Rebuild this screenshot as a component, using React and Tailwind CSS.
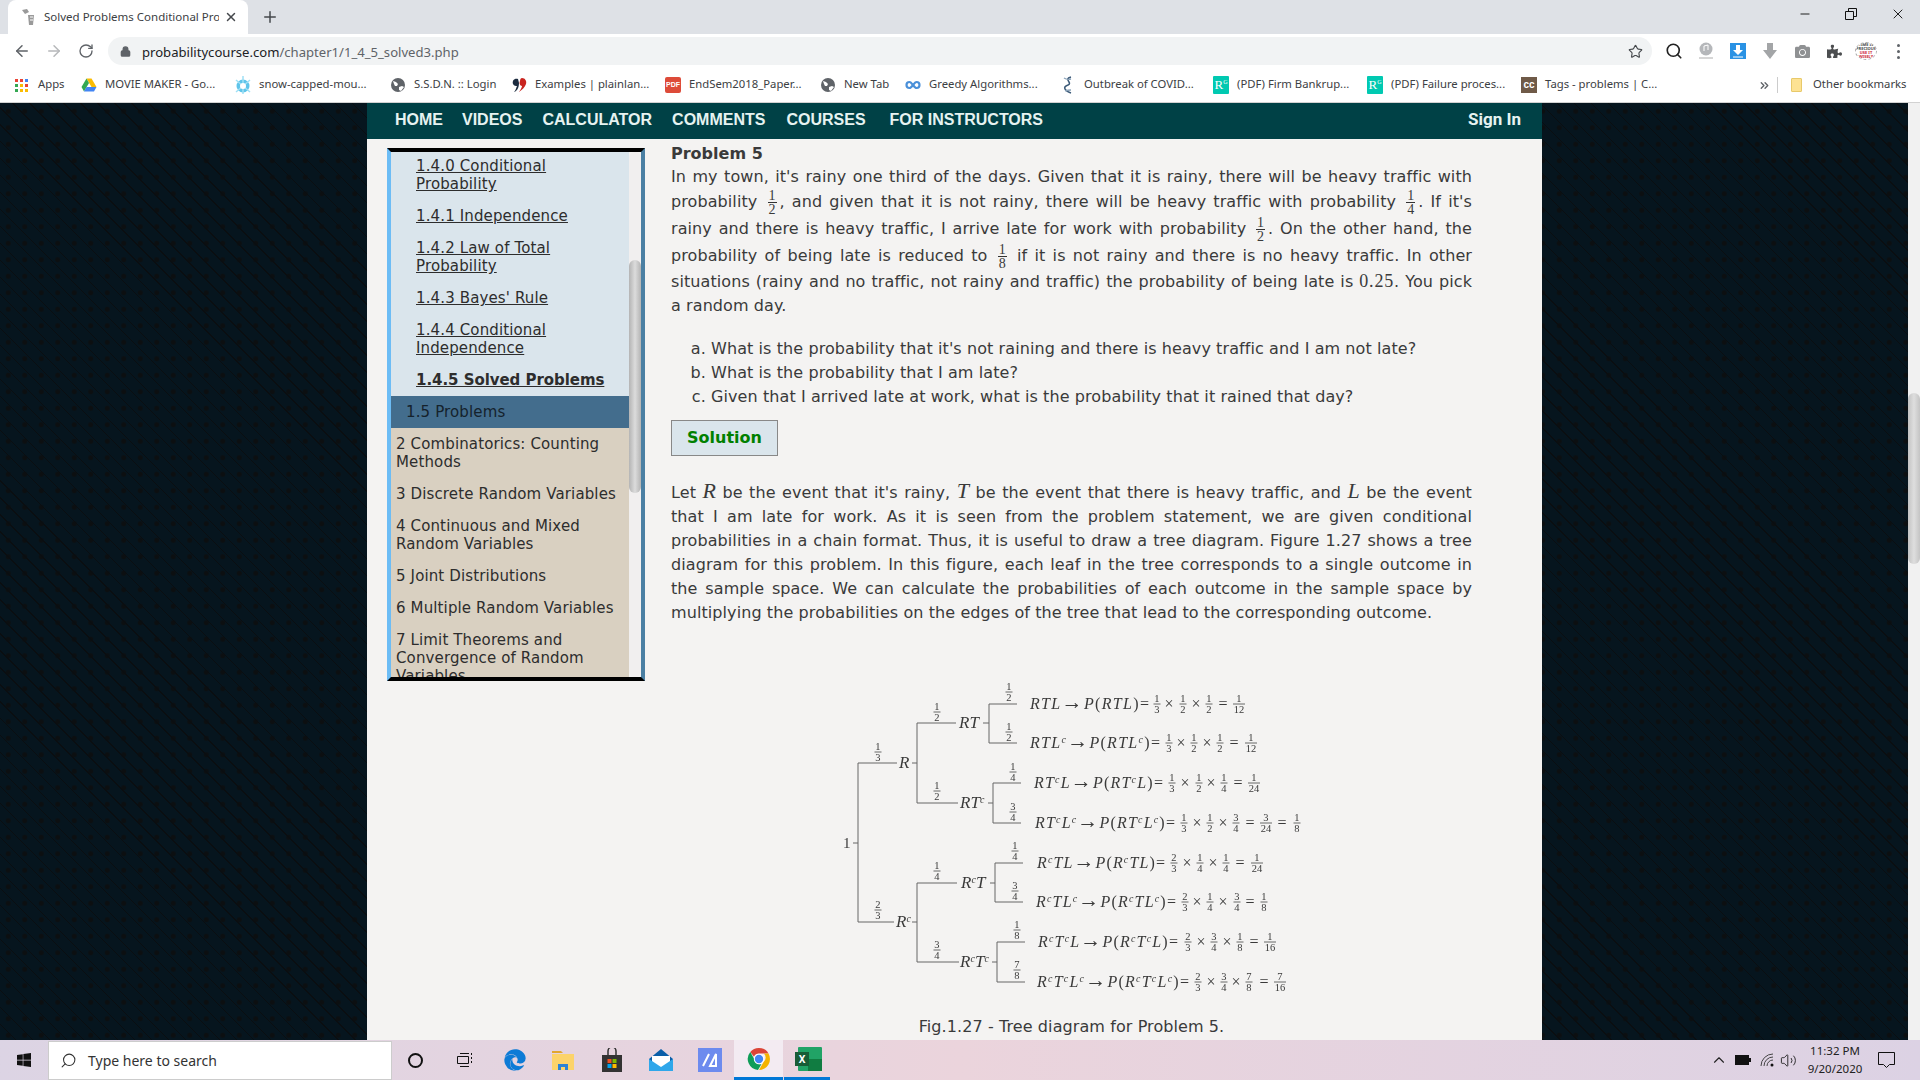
import React from 'react';
import { ArrowLeft, ArrowRight, RotateCw, Lock, Star, Search, Plus, X, Minus, ChevronUp, ChevronsRight, Volume2 } from 'lucide-react';
import { FaEdge, FaWindows, FaPuzzlePiece, FaCamera } from 'react-icons/fa';

const Globe = () => (
  <svg width="16" height="16" viewBox="0 0 16 16"><circle cx="8" cy="8" r="7" fill="#5f6368" /><path d="M3 4l3 1 2 2-1 2-2 0-1-2zM9 10l3-1 2 1-3 4-2-1z" fill="#fff" /></svg>
);
const Drive = () => (
  <svg width="16" height="16" viewBox="0 0 16 16"><path d="M5.5 1.5h5L15.5 10h-5z" fill="#fbbc04" /><path d="M5.5 1.5L.5 10 3 14.500 8 6z" fill="#34a853" /><path d="M3 14.500h10L15.500 10H5.500z" fill="#4285f4" /></svg>
);
const Snow = () => (
  <svg width="16" height="18" viewBox="0 0 16 18"><circle cx="8" cy="10" r="6.500" fill="#5ec4ea" /><path d="M8 0v18M1 4l14 12M15 4L1 16" stroke="#9fe0f5" strokeWidth="1.500" /><circle cx="8" cy="10" r="3" fill="#fff" /></svg>
);
const Quotes = () => (
  <svg width="16" height="16" viewBox="0 0 16 16"><path d="M7 2C3 1 1 4 2 7c1 2 3 2 4 2-1 2-1 4-3 6 4-1 5-6 5-9z" fill="#1b2b3f" /><path d="M11 1c3 0 5 3 4 6-1 3-4 6-7 8 2-3 3-5 3-6-2 0-3-3-2-5 0-2 1-3 2-3z" fill="#c9241f" /></svg>
);
const PdfIcon = () => (
  <div className="w-[16px] h-[16px] rounded-[2px] bg-[#dd4b39] text-white text-[7px] font-bold leading-[16px] text-center [font-family:'Liberation_Sans',sans-serif]">PDF</div>
);
const Infinity8 = () => (
  <svg width="16" height="16" viewBox="0 0 16 16" fill="none"><path d="M4.500 5a3 3 0 100 6c2.500 0 4.500-6 7-6a3 3 0 110 6c-2.500 0-4.500-6-7-6z" stroke="#4a90d9" strokeWidth="2.200" /></svg>
);
const Dna = () => (
  <svg width="16" height="18" viewBox="0 0 16 18" fill="none"><path d="M11 1C3 3 13 7 8 9c-6 2-3 6 3 8" stroke="#3c5a78" strokeWidth="1.600" /><path d="M4 2c3 2 7 1 7 1M5 15c3-1 6-1 6-1" stroke="#8aa2b8" strokeWidth="1.300" /></svg>
);
const RBadge = () => (
  <div className="w-[16px] h-[18px] rounded-[1px] bg-[#00c9b1] text-white flex items-start justify-center leading-[18px] [font-family:'Liberation_Serif',serif]">
    <span className="text-[13px]">R</span>
    <span className="text-[6px] leading-[12px]">G</span>
  </div>
);
const CcBadge = () => (
  <div className="w-[16px] h-[16px] bg-[#6f5a48] text-white text-[10px] font-bold leading-[15px] text-center [font-family:'Liberation_Sans',sans-serif]">cc</div>
);

const Bookmark = ({ icon, text, className }) => (
  <div className={`flex items-center gap-2 shrink-0 ${className}`}>
    <div className="shrink-0">{icon}</div>
    <span className="whitespace-nowrap -mt-[2px]">{text}</span>
  </div>
);

const ChromeLogo = () => (
  <svg width="24" height="24" viewBox="0 0 24 24">
    <path d="M12 1a11 11 0 019.500 5.500H12a5.500 5.500 0 00-5 3.200L3.300 5A11 11 0 0112 1z" fill="#db4437" />
    <path d="M21.500 6.500A11 11 0 0112 23l4.700-8.200a5.500 5.500 0 00.100-8.300z" fill="#f4b400" />
    <path d="M3.300 5L8 13.500a5.500 5.500 0 006.500 3.400L11 23A11 11 0 013.300 5z" fill="#0f9d58" />
    <circle cx="12" cy="12" r="5.200" fill="#fff" />
    <circle cx="12" cy="12" r="4.200" fill="#4285f4" />
  </svg>
);

const ToolSlot = ({ children }) => (
  <div className="w-[32px] flex items-center justify-center shrink-0">{children}</div>
);

const TopBar = () => (
  <div className="shrink-0 [font-family:'Noto_Sans',sans-serif]">
    <div className="h-[34px] bg-[#dee1e6] flex items-end relative">
      <div className="ml-2 w-[240px] h-[34px] bg-white rounded-t-[8px] flex items-center pl-3 text-[11.500px] text-[#3c4043]">
        <svg width="16" height="18" viewBox="0 0 16 18" className="shrink-0"><path d="M2 2l5-1 2 3-4 2zM8 7h6l-1 10H9z" fill="#9a9a9a" /><path d="M10 9h3M10 12h3" stroke="#fff" /></svg>
        <span className="ml-2 w-[175px] overflow-hidden whitespace-nowrap">Solved Problems Conditional Probability</span>
        <X size={14} strokeWidth={2.5} className="ml-[5px] text-[#45484c]" />
      </div>
      <Plus size={18} strokeWidth={2} className="ml-[13px] mb-2 text-[#45484c]" />
      <div className="ml-auto mr-[14px] self-start mt-[6px] flex items-center gap-[32px] text-[#111]">
        <Minus size={14} strokeWidth={1.600} />
        <svg width="14" height="14" viewBox="0 0 14 14" fill="none" stroke="#111"><path d="M1.500 4.500h8v8h-8zM4.500 4.500v-3h8v8h-3" /></svg>
        <X size={16} strokeWidth={1.400} />
      </div>
    </div>
    <div className="h-[34px] bg-white flex items-center">
      <ArrowLeft size={18} strokeWidth={2} className="ml-[13px] text-[#5f6368]" />
      <ArrowRight size={18} strokeWidth={2} className="ml-[14px] text-[#b6b8ba]" />
      <RotateCw size={16} strokeWidth={2} className="ml-[15px] text-[#5f6368]" />
      <div className="ml-[14px] w-[1544px] h-[28px] bg-[#f1f3f4] rounded-full flex items-center pl-[12px] pr-[9px]">
        <Lock size={11} strokeWidth={3} className="text-[#5f6368] fill-[#5f6368]" />
        <span className="ml-[11px] mt-[3px] text-[13.100px] text-[#202124] whitespace-nowrap">probabilitycourse.com<span className="text-[#5f6368]">/chapter1/1_4_5_solved3.php</span></span>
        <Star size={15} strokeWidth={1.800} className="ml-auto text-[#45484c]" />
      </div>
      <div className="ml-[6px] flex items-center">
        <ToolSlot><Search size={18} strokeWidth={2.200} className="text-[#222]" /></ToolSlot>
        <ToolSlot><svg width="16" height="18" viewBox="0 0 16 18"><circle cx="8" cy="7" r="6.500" fill="#b5b7ba" /><path d="M6 9V4l4-1v5" stroke="#fff" fill="none" /><path d="M1 16h14" stroke="#c8c8c8" strokeWidth="1.500" /></svg></ToolSlot>
        <ToolSlot><svg width="16" height="16" viewBox="0 0 16 16"><rect width="16" height="16" fill="#2a92e4" /><path d="M6 2h4v5h3l-5 5-5-5h3z" fill="#fff" /><path d="M3 14h10" stroke="#fff" /></svg></ToolSlot>
        <ToolSlot><svg width="16" height="18" viewBox="0 0 16 18"><path d="M5 1h6v7h4l-7 9-7-9h4z" fill="#a3a5a7" /></svg></ToolSlot>
        <ToolSlot><FaCamera size={15} className="text-[#8f9193]" /></ToolSlot>
        <ToolSlot><FaPuzzlePiece size={15} className="text-[#4c4e50]" /></ToolSlot>
        <ToolSlot>
          <div className="w-[22px] h-[18px] rounded-[50%] border border-dashed border-[#aaa] text-[4px] leading-[4px] text-center font-bold text-[#444] overflow-hidden">TIME IS<br />PRECIOUS<br /><span className="text-[#c23]">USE IT<br />WISELY</span></div>
        </ToolSlot>
        <ToolSlot>
          <div className="flex flex-col gap-[3px]">
            <div className="w-[3px] h-[3px] rounded-full bg-[#5f6368]" />
            <div className="w-[3px] h-[3px] rounded-full bg-[#5f6368]" />
            <div className="w-[3px] h-[3px] rounded-full bg-[#5f6368]" />
          </div>
        </ToolSlot>
      </div>
    </div>
    <div className="h-[35px] bg-white border-b border-[#d2d2d2] flex items-center pl-[15px] text-[11.300px] text-[#3c4043]">
      <Bookmark
        className="w-[66px] gap-[10px]"
        text="Apps"
        icon={
          <div className="grid grid-cols-3 gap-[2px] w-[13px]">
            <div className="w-[3px] h-[3px] bg-[#ea4335]" /><div className="w-[3px] h-[3px] bg-[#ea4335]" /><div className="w-[3px] h-[3px] bg-[#4285f4]" />
            <div className="w-[3px] h-[3px] bg-[#34a853]" /><div className="w-[3px] h-[3px] bg-[#fbbc04]" /><div className="w-[3px] h-[3px] bg-[#ea4335]" />
            <div className="w-[3px] h-[3px] bg-[#34a853]" /><div className="w-[3px] h-[3px] bg-[#fbbc04]" /><div className="w-[3px] h-[3px] bg-[#fbbc04]" />
          </div>
        }
      />
      <Bookmark className="w-[154px]" icon={<Drive />} text="MOVIE MAKER - Go..." />
      <Bookmark className="w-[155px]" icon={<Snow />} text="snow-capped-mou..." />
      <Bookmark className="w-[121px]" icon={<Globe />} text="S.S.D.N. :: Login" />
      <Bookmark className="w-[154px]" icon={<Quotes />} text="Examples | plainlan..." />
      <Bookmark className="w-[155px]" icon={<PdfIcon />} text="EndSem2018_Paper..." />
      <Bookmark className="w-[85px]" icon={<Globe />} text="New Tab" />
      <Bookmark className="w-[155px]" icon={<Infinity8 />} text="Greedy Algorithms..." />
      <Bookmark className="w-[153px]" icon={<Dna />} text="Outbreak of COVID..." />
      <Bookmark className="w-[154px]" icon={<RBadge />} text="(PDF) Firm Bankrup..." />
      <Bookmark className="w-[154px]" icon={<RBadge />} text="(PDF) Failure proces..." />
      <Bookmark className="w-[135px]" icon={<CcBadge />} text="Tags - problems | C..." />
      <ChevronsRight size={13} strokeWidth={2.500} className="ml-[102px] text-[#5f6368]" />
      <div className="ml-[6px] w-px h-[16px] bg-[#ccc]" />
      <div className="ml-[13px] w-[11px] h-[14px] rounded-[1px] bg-[#fde293] border border-[#e8c96a]" />
      <span className="ml-[11px] -mt-[2px] whitespace-nowrap">Other bookmarks</span>
    </div>
  </div>
);

const NavBar = () => (
  <div className="h-[36px] bg-[#004146] flex items-center pb-[2px] pl-[28px] pr-[21px] text-[16px] font-bold text-[#e6f3f1] [font-family:'Liberation_Sans',sans-serif]">
    <span>HOME</span>
    <span className="ml-[19px]">VIDEOS</span>
    <span className="ml-[20px]">CALCULATOR</span>
    <span className="ml-[20px]">COMMENTS</span>
    <span className="ml-[21px]">COURSES</span>
    <span className="ml-[24px]">FOR INSTRUCTORS</span>
    <span className="ml-auto text-[17px] [font-family:Roboto,sans-serif]">Sign In</span>
  </div>
);

const subItems = [
  { label: '1.4.0 Conditional Probability' },
  { label: '1.4.1 Independence' },
  { label: '1.4.2 Law of Total Probability' },
  { label: "1.4.3 Bayes' Rule" },
  { label: '1.4.4 Conditional Independence' },
  { label: '1.4.5 Solved Problems', bold: true },
];
const chapters = [
  '2 Combinatorics: Counting Methods',
  '3 Discrete Random Variables',
  '4 Continuous and Mixed Random Variables',
  '5 Joint Distributions',
  '6 Multiple Random Variables',
  '7 Limit Theorems and Convergence of Random Variables',
];

const Sidebar = () => (
  <div className="ml-[20px] mt-[9px] w-[258px] h-[533px] shrink-0 border-t-4 border-b-4 border-l-4 border-r-4 border-t-black border-b-black border-l-[#6cbcf5] border-r-[#4a7fa3] flex text-[15px] tracking-[0.13px] leading-[18px] text-[#2d2d2d]">
    <div className="flex-1 overflow-hidden">
      <div className="-mt-[2px]">
        {subItems.map((item) => (
          <div key={item.label} className="bg-[#dae5ec] py-[7px] pl-[25px] pr-[20px]">
            <a className={`underline ${item.bold ? 'font-bold tracking-[-0.05px]' : ''}`}>{item.label}</a>
          </div>
        ))}
        <div className="bg-[#436d8d] py-[7px] pl-[15px] text-[#15222c]">1.5 Problems</div>
        {chapters.map((c) => (
          <div key={c} className="bg-[#d9d0c1] py-[7px] pl-[5px] pr-[10px]">{c}</div>
        ))}
      </div>
    </div>
    <div className="w-[12px] shrink-0 bg-[#f1efef] rounded-full">
      <div className="mt-[108px] h-[233px] rounded-full bg-linear-to-r from-[#b4b4b4] via-[#dcdcdc] to-[#b4b4b4]" />
    </div>
  </div>
);

const Frac = ({ n, d }) => (
  <span className="inline-flex flex-col items-center align-middle mx-[3px] text-[14px] leading-[13px] tracking-normal [font-family:'Liberation_Serif',serif]">
    <span className="border-b border-[#333] px-[1px]">{n}</span>
    <span>{d}</span>
  </span>
);

const Mi = ({ children }) => (
  <span className="italic text-[22px] leading-[20px] [font-family:'Liberation_Serif',serif]">{children}</span>
);

// edge and leaf fractions of the tree figure
const TF = ({ x, y, n, d }) => (
  <g>
    <text x={x} y={y - 2} textAnchor="middle" fontSize="10.500">{n}</text>
    <path d={`M${x - (String(d).length > 1 ? 6 : 3.5)} ${y}h${String(d).length > 1 ? 12 : 7}`} stroke="#444" strokeWidth="0.800" />
    <text x={x} y={y + 9} textAnchor="middle" fontSize="10.500">{d}</text>
  </g>
);

const Node = ({ x, y, parts }) => (
  <text x={x} y={y + 5} fontSize="17" fontStyle="italic">
    <Sym parts={parts} />
  </text>
);

const leaves = [
  { y: 703, x: 1030, end: 1149, left: ['R', 'T', 'L'], fr: [[1157, 1, 3], [1183, 1, 2], [1209, 1, 2]], ops: [[1169, '×'], [1196, '×'], [1223, '=']], tail: [[1239, 1, 12]] },
  { y: 742, x: 1030, end: 1160, left: ['R', 'T', 'L', 'c'], fr: [[1169, 1, 3], [1194, 1, 2], [1220, 1, 2]], ops: [[1181, '×'], [1207, '×'], [1234, '=']], tail: [[1251, 1, 12]] },
  { y: 782, x: 1034, end: 1163, left: ['R', 'T', 'c', 'L'], fr: [[1172, 1, 3], [1199, 1, 2], [1224, 1, 4]], ops: [[1185, '×'], [1211, '×'], [1238, '=']], tail: [[1254, 1, 24]] },
  { y: 822, x: 1035, end: 1175, left: ['R', 'T', 'c', 'L', 'c'], fr: [[1184, 1, 3], [1210, 1, 2], [1236, 3, 4]], ops: [[1197, '×'], [1223, '×'], [1250, '='], [1282, '=']], tail: [[1266, 3, 24], [1297, 1, 8]] },
  { y: 862, x: 1037, end: 1165, left: ['R', 'c', 'T', 'L'], fr: [[1174, 2, 3], [1200, 1, 4], [1226, 1, 4]], ops: [[1187, '×'], [1213, '×'], [1240, '=']], tail: [[1257, 1, 24]] },
  { y: 901, x: 1036, end: 1176, left: ['R', 'c', 'T', 'L', 'c'], fr: [[1185, 2, 3], [1210, 1, 4], [1237, 3, 4]], ops: [[1197, '×'], [1223, '×'], [1250, '=']], tail: [[1264, 1, 8]] },
  { y: 941, x: 1038, end: 1178, left: ['R', 'c', 'T', 'c', 'L'], fr: [[1188, 2, 3], [1214, 3, 4], [1240, 1, 8]], ops: [[1201, '×'], [1227, '×'], [1254, '=']], tail: [[1270, 1, 16]] },
  { y: 981, x: 1037, end: 1189, left: ['R', 'c', 'T', 'c', 'L', 'c'], fr: [[1198, 2, 3], [1224, 3, 4], [1249, 7, 8]], ops: [[1211, '×'], [1236, '×'], [1264, '=']], tail: [[1280, 7, 16]] },
];

function Sym({ parts }) {
  return parts.map((p, i) => {
    const after = i > 0 && parts[i - 1] === 'c';
    return p === 'c'
      ? <tspan key={i} fontSize="10" dy="-5">c</tspan>
      : <tspan key={i} dy={after ? 5 : 0}>{p}</tspan>;
  });
}

const Leaf = ({ leaf }) => {
  const hasEndSup = leaf.left[leaf.left.length - 1] === 'c';
  return (
    <g>
      <text x={leaf.x} y={leaf.y + 5} fontSize="16" fontStyle="italic" textLength={leaf.end - leaf.x} lengthAdjust="spacing">
        <Sym parts={leaf.left} />
        <tspan fontStyle="normal" fontSize="21" dy={hasEndSup ? 5 : 0}>→</tspan>
        <tspan>P</tspan>
        <tspan fontStyle="normal">(</tspan>
        <Sym parts={leaf.left} />
        <tspan fontStyle="normal" dy={hasEndSup ? 5 : 0}>)=</tspan>
      </text>
      {leaf.fr.concat(leaf.tail).map(([x, n, d], i) => <TF key={i} x={x} y={leaf.y} n={n} d={d} />)}
      {leaf.ops.map(([x, s], i) => <text key={i} x={x} y={leaf.y + 5} textAnchor="middle" fontSize="16">{s}</text>)}
    </g>
  );
};

const TreeFigure = () => (
  <svg viewBox="830 670 480 330" width="480" height="330" className="ml-[159px] mt-[46px] block blur-[0.4px]" fill="#3a3a3a" fontFamily="'Liberation Serif', serif">
    <g stroke="#666" strokeWidth="1" fill="none">
      <path d="M897 762H858V921H894M853 842H858" />
      <path d="M956 722H917V802H958M912 762H917M912 921H917M957 882H917V961H959" />
      <path d="M1017 703H989V742H1017M983 722H989" />
      <path d="M1021 782H993V822H1021M988 802H993" />
      <path d="M1023 862H995V901H1023M990 882H995" />
      <path d="M1025 941H997V981H1025M992 961H997" />
    </g>
    <text x="843" y="847" fontSize="15">1</text>
    <Node x={899} y={762} parts={['R']} />
    <Node x={959} y={722} parts={['R', 'T']} />
    <Node x={960} y={802} parts={['R', 'T', 'c']} />
    <Node x={896} y={921} parts={['R', 'c']} />
    <Node x={961} y={882} parts={['R', 'c', 'T']} />
    <Node x={960} y={961} parts={['R', 'c', 'T', 'c']} />
    <TF x={878} y={751} n={1} d={3} />
    <TF x={878} y={909} n={2} d={3} />
    <TF x={937} y={711} n={1} d={2} />
    <TF x={937} y={790} n={1} d={2} />
    <TF x={937} y={870} n={1} d={4} />
    <TF x={937} y={949} n={3} d={4} />
    <TF x={1009} y={691} n={1} d={2} />
    <TF x={1009} y={731} n={1} d={2} />
    <TF x={1013} y={771} n={1} d={4} />
    <TF x={1013} y={811} n={3} d={4} />
    <TF x={1015} y={850} n={1} d={4} />
    <TF x={1015} y={890} n={3} d={4} />
    <TF x={1017} y={929} n={1} d={8} />
    <TF x={1017} y={969} n={7} d={8} />
    {leaves.map((l) => <Leaf key={l.y} leaf={l} />)}
  </svg>
);

const Article = () => (
  <div className="ml-[26px] mt-[5px] w-[801px] shrink-0 text-[16px] tracking-[0.09px] leading-[24px] text-[#3a3a3a]">
    <h3 className="text-[16px] tracking-normal leading-[20px] font-bold mb-[1px]">Problem 5</h3>
    <p className="text-justify">
      In my town, it's rainy one third of the days. Given that it is rainy, there will be heavy traffic with probability <Frac n="1" d="2" />, and given that it is not rainy, there will be heavy traffic with probability <Frac n="1" d="4" />. If it's rainy and there is heavy traffic, I arrive late for work with probability <Frac n="1" d="2" />. On the other hand, the probability of being late is reduced to <Frac n="1" d="8" /> if it is not rainy and there is no heavy traffic. In other situations (rainy and no traffic, not rainy and traffic) the probability of being late is <span className="text-[18px] tracking-[0.8px] leading-[20px] [font-family:'Liberation_Serif',serif]">0.25</span>. You pick a random day.
    </p>
    <ol className="list-[lower-alpha] mt-[19px] pl-[40px]">
      <li>What is the probability that it's not raining and there is heavy traffic and I am not late?</li>
      <li>What is the probability that I am late?</li>
      <li>Given that I arrived late at work, what is the probability that it rained that day?</li>
    </ol>
    <button className="mt-[11px] block w-[107px] h-[36px] bg-[#dae5ec] border border-[#888] text-[16px] tracking-normal font-bold text-[#008000]">Solution</button>
    <p className="mt-[25px] text-justify">
      Let <Mi>R</Mi> be the event that it's rainy, <Mi>T</Mi> be the event that there is heavy traffic, and <Mi>L</Mi> be the event that I am late for work. As it is seen from the problem statement, we are given conditional probabilities in a chain format. Thus, it is useful to draw a tree diagram. Figure 1.27 shows a tree diagram for this problem. In this figure, each leaf in the tree corresponds to a single outcome in the sample space. We can calculate the probabilities of each outcome in the sample space by multiplying the probabilities on the edges of the tree that lead to the corresponding outcome.
    </p>
    <TreeFigure />
    <p className="mt-[14px] text-center">Fig.1.27 - Tree diagram for Problem 5.</p>
  </div>
);

const TaskIcon = ({ children, className }) => (
  <div className={`w-[49px] h-full flex items-center justify-center shrink-0 ${className || ''}`}>{children}</div>
);

const Taskbar = () => (
  <div className="h-[40px] shrink-0 flex items-center bg-linear-to-r from-[#dcd4e4] via-[#ebd4dc] to-[#dcd2e4] text-[#222] [font-family:'Noto_Sans',sans-serif]">
    <div className="w-[48px] flex justify-center"><FaWindows size={16} className="text-[#111]" /></div>
    <div className="w-[344px] h-[39px] bg-white border border-[#ccc] flex items-center pl-[11px] text-[14px] text-[#333]">
      <Search size={17} strokeWidth={1.500} className="-scale-x-100" />
      <span className="ml-[11px]">Type here to search</span>
    </div>
    <div className="w-[49px] ml-[-1px] flex justify-center"><div className="w-[15px] h-[15px] rounded-full border-2 border-[#111]" /></div>
    <TaskIcon>
      <svg width="16" height="16" viewBox="0 0 16 16" fill="none" stroke="#111"><path d="M.5 4.500h11v7H.5zM3 1.500h9M3 14.500h9M14.500 1v2M14.500 5v2M14.500 9v2" /></svg>
    </TaskIcon>
    <TaskIcon className="pl-[3px]"><FaEdge size={22} className="text-[#0d7bd6]" /></TaskIcon>
    <TaskIcon>
      <svg width="22" height="20" viewBox="0 0 22 20"><path d="M0 1h9l2 2H0z" fill="#e2a72e" /><path d="M0 4h22v16H0z" fill="#fcd36a" /><path d="M6 14h10v6h-3v-3H9v3H6z" fill="#2a83d6" /></svg>
    </TaskIcon>
    <TaskIcon>
      <svg width="22" height="24" viewBox="0 0 22 24"><path d="M1 7h20v17H1z" fill="#333" /><path d="M7 8V3a4 4 0 018 0v5" stroke="#333" strokeWidth="1.500" fill="none" /><rect x="6.500" y="11" width="4" height="4" fill="#f25022" /><rect x="11.500" y="11" width="4" height="4" fill="#7fba00" /><rect x="6.500" y="16" width="4" height="4" fill="#00a4ef" /><rect x="11.500" y="16" width="4" height="4" fill="#ffb900" /></svg>
    </TaskIcon>
    <TaskIcon>
      <svg width="24" height="24" viewBox="0 0 24 24"><path d="M12 1l12 10v12H0V11z" fill="#0a5ea8" /><path d="M3 8h18v9l-9 4-9-4z" fill="#fff" /><path d="M0 11l12 8 12-8v12H0z" fill="#2fa7ea" /></svg>
    </TaskIcon>
    <TaskIcon>
      <div className="w-[24px] h-[24px] bg-[#6d8bee] flex items-center justify-center">
        <svg width="16" height="14" viewBox="0 0 16 14" fill="none" stroke="#fff" strokeWidth="2"><path d="M7 1L1 13M14 1L8 13h6z" /></svg>
      </div>
    </TaskIcon>
    <TaskIcon className="bg-[#f3ebf2] border-b-[3px] border-[#0078d7]"><ChromeLogo /></TaskIcon>
    <div className="w-[46px] ml-[1px] pl-[6px] h-full flex items-center justify-center border-b-[3px] border-[#0078d7] mr-auto">
      <div className="relative w-[24px] h-[24px] bg-[#21a366] rounded-[1px]">
        <div className="absolute right-0 top-[12px] w-[14px] h-[12px] bg-[#107c41]" />
        <div className="absolute left-[-3px] top-[5px] w-[14px] h-[14px] bg-[#185c37] text-white text-[10px] font-bold leading-[14px] text-center">X</div>
      </div>
    </div>
    <div className="flex items-center">
      <ChevronUp size={18} strokeWidth={1.500} />
      <svg width="16" height="10" viewBox="0 0 16 10" className="ml-[7px]"><rect x=".5" y=".5" width="13" height="9" fill="#111" stroke="#111" /><rect x="14" y="3" width="2" height="4" fill="#111" /></svg>
      <svg width="14" height="14" viewBox="0 0 14 14" fill="none" stroke="#444" className="ml-[9px]"><path d="M1 13A12 12 0 0113 1M4 13a9 9 0 019-9M7 13a6 6 0 016-6" /><circle cx="12" cy="12" r="1.500" fill="#111" stroke="none" /></svg>
      <Volume2 size={17} strokeWidth={1.300} className="ml-[6px]" />
      <div className="ml-[2px] w-[72px] text-center text-[11.500px] leading-[18px] text-[#222]">11:32 PM<br />9/20/2020</div>
      <svg width="17" height="16" viewBox="0 0 17 16" fill="none" stroke="#111" className="ml-[7px] mr-[25px]"><path d="M.5.5h16v12h-5l-3 3-3-3h-5z" /></svg>
    </div>
  </div>
);

const App = () => (
  <div className="w-[1920px] h-[1080px] flex flex-col overflow-hidden">
    <TopBar />
    <div className="flex-1 min-h-0 flex">
      <div className="flex-1 pl-[367px] bg-[#06151e] bg-[repeating-linear-gradient(45deg,transparent_0_11px,#0a0e11_11px_12px),radial-gradient(circle,#0c0f11_2px,transparent_3px)] bg-[length:auto,16.500px_16.500px]">
        <div className="w-[1175px] h-full bg-[#f4f3f2] [font-family:'DejaVu_Sans',sans-serif] overflow-hidden">
          <NavBar />
          <div className="flex">
            <Sidebar />
            <Article />
          </div>
        </div>
      </div>
      <div className="w-[12px] shrink-0 bg-[#f1f1f1]">
        <div className="mt-[290px] h-[171px] rounded-full bg-linear-to-r from-[#c4c4c4] via-[#dedede] to-[#c4c4c4]" />
      </div>
    </div>
    <Taskbar />
  </div>
);

export default App;
